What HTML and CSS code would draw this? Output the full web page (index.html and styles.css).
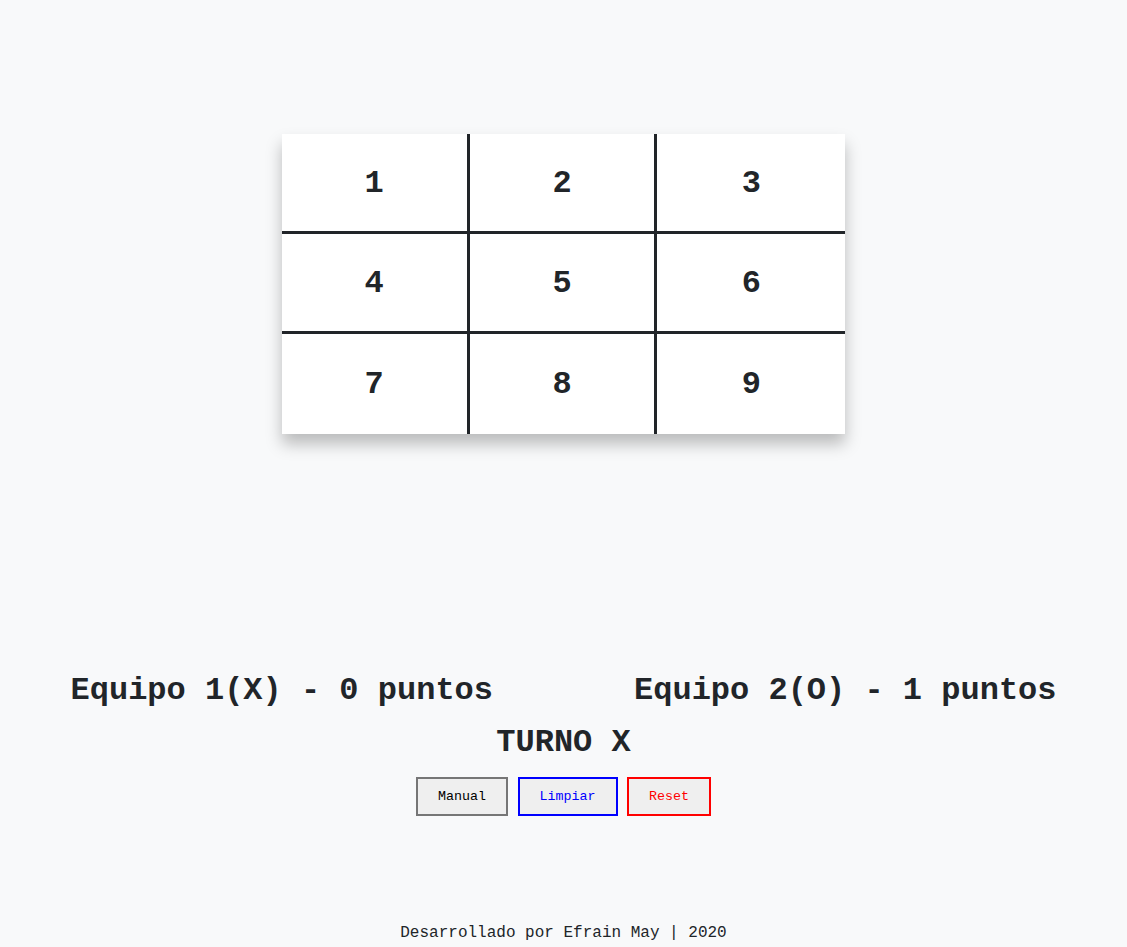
FILE: index.html
```html
<!DOCTYPE html>
<html lang="es">
<head>
<meta charset="utf-8">
<title>Gato</title>
<link rel="stylesheet" href="styles.css">
</head>
<body>
<div class="page">
  <main class="main">
    <div class="board">
      <div class="cell">1</div>
      <div class="cell">2</div>
      <div class="cell">3</div>
      <div class="cell">4</div>
      <div class="cell">5</div>
      <div class="cell">6</div>
      <div class="cell">7</div>
      <div class="cell">8</div>
      <div class="cell">9</div>
    </div>
    <div class="scores">
      <h2 class="score">Equipo 1(X) - 0 puntos</h2>
      <h2 class="score">Equipo 2(O) - 1 puntos</h2>
    </div>
    <h2 class="turn">TURNO X</h2>
    <div class="actions">
      <button class="btn btn-manual">Manual</button>
      <button class="btn btn-clear">Limpiar</button>
      <button class="btn btn-reset">Reset</button>
    </div>
  </main>
  <footer class="footer">Desarrollado por Efrain May | 2020</footer>
</div>
</body>
</html>
```

FILE: styles.css
```css
* { box-sizing: border-box; }
html, body { margin: 0; padding: 0; }
body {
  background: #f8f9fa;
  color: #212529;
  font-family: "Liberation Mono", "Courier New", monospace;
  font-size: 16px;
  line-height: 1.5;
}
.page {
  min-height: 100vh;
  display: flex;
  flex-direction: column;
}
.main {
  padding-top: 134px;
}
.board {
  width: 50%;
  margin: 0 auto;
  display: grid;
  grid-template-columns: repeat(3, 1fr);
  grid-template-rows: repeat(3, 100px);
  background: #fff;
  box-shadow: 0 10px 15px rgba(0, 0, 0, 0.25);
}
.cell {
  display: flex;
  align-items: center;
  justify-content: center;
  padding-top: 2px;
  font-size: 32px;
  font-weight: bold;
  border-right: 3px solid #212529;
  border-bottom: 3px solid #212529;
}
.cell:nth-child(3n) { border-right: none; }
.cell:nth-child(n+7) { border-bottom: none; }
.scores {
  display: flex;
  margin-top: 238px;
}
.score {
  flex: 1 1 50%;
  margin: 0;
  text-align: center;
  font-size: 32px;
  line-height: 1.2;
  font-weight: bold;
}
.turn {
  margin: 14px 0 0;
  text-align: center;
  font-size: 32px;
  line-height: 1.2;
  font-weight: bold;
}
.actions {
  margin-top: 14px;
  text-align: center;
  font-size: 16px;
  line-height: 1;
}
.btn {
  font-family: "Liberation Mono", "Courier New", monospace;
  font-size: 13.333px;
  line-height: 15px;
  padding: 10px 20px;
  background: #efefef;
  border: 2px solid #767676;
  color: #000;
  margin: 0;
}
.btn-clear { border-color: #0000ff; color: #0000ff; }
.btn-reset { border-color: #ff0000; color: #ff0000; }
.footer {
  margin-top: auto;
  padding-bottom: 2px;
  text-align: center;
  font-size: 16px;
  line-height: 24px;
}
```
